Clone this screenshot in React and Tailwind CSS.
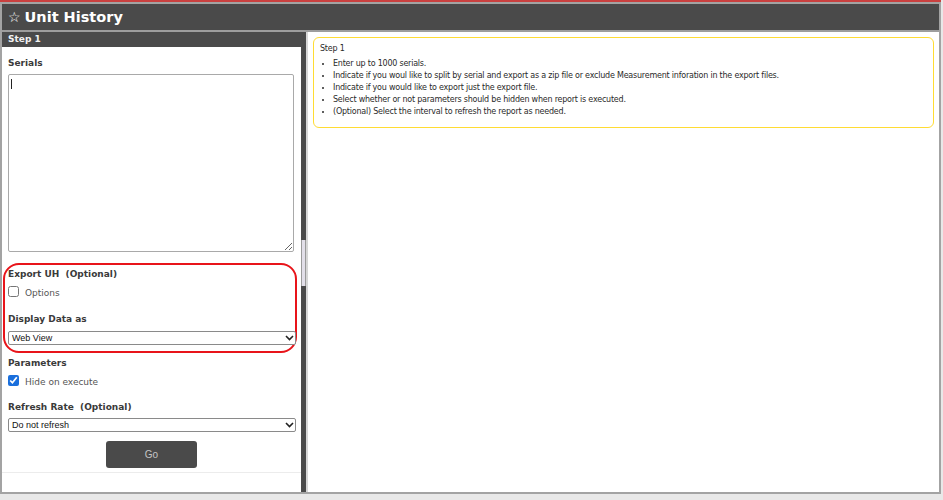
import { useState } from "react";

const Chevron = () => (
  <svg
    className="pointer-events-none absolute right-[2px] top-[4px]"
    width="9"
    height="6"
    viewBox="0 0 9 6"
  >
    <path d="M1 1l3.5 3.5L8 1" fill="none" stroke="#222" strokeWidth="1.6" />
  </svg>
);

const Select = ({ value, onChange, options }) => (
  <div className="relative h-[14px] w-[288px]">
    <select
      value={value}
      onChange={(e) => onChange(e.target.value)}
      className="block h-[14px] w-full appearance-none rounded-[2px] border border-[#8a8a8a] bg-white pl-[3px] font-['Liberation_Sans',sans-serif] text-[9px] leading-[12px] text-[#111]"
    >
      {options.map((o) => (
        <option key={o}>{o}</option>
      ))}
    </select>
    <Chevron />
  </div>
);

const Label = ({ children, className = "" }) => (
  <div className={`text-[9px] font-bold leading-[12px] text-[#3a3a3a] ${className}`}>
    {children}
  </div>
);

const App = () => {
  const [serials, setSerials] = useState("");
  const [exportOpt, setExportOpt] = useState(false);
  const [display, setDisplay] = useState("Web View");
  const [hide, setHide] = useState(true);
  const [refresh, setRefresh] = useState("Do not refresh");

  return (
    <div className="h-[500px] w-[943px] overflow-hidden bg-[#e8e8e8] font-['DejaVu_Sans',sans-serif]">
      <div className="h-[2px] w-[941px] bg-[#c9403f]" />
      <div className="flex h-[492px] w-[941px] flex-col border-x-2 border-t-2 border-b-2 border-[#a3a3a3] bg-white">
        {/* title bar */}
        <div className="flex h-[26px] shrink-0 items-center gap-[4px] bg-[#4a4a4a] pl-[6px] text-white">
          <span className="text-[14px] leading-none">☆</span>
          <span className="text-[14.5px] font-bold leading-none">Unit History</span>
        </div>
        <div className="h-[2px] shrink-0 bg-[#9d9d9d]" />

        <div className="flex min-h-0 flex-1">
          {/* left panel */}
          <div className="flex w-[299px] shrink-0 flex-col bg-white">
            <div className="flex h-[15px] shrink-0 items-center bg-[#4a4a4a] pl-[6px] text-[9px] font-bold text-[#f2f2f2]">
              Step 1
            </div>
            <div className="flex flex-col px-[6px]">
              <Label className="mt-[10px]">Serials</Label>
              <div className="relative mt-[5px]">
                <textarea
                  value={serials}
                  onChange={(e) => setSerials(e.target.value)}
                  className="block h-[178px] w-[286px] rounded-[2px] border border-[#a9a9a9] bg-white p-[2px] text-[9px]"
                />
                <span className="pointer-events-none absolute left-[3px] top-[5px] h-[10px] w-px bg-[#222]" />
              </div>

              <div className="relative mt-[16px]">
                <div className="pointer-events-none absolute -bottom-[8px] -left-[5px] -right-[2px] -top-[5px] rounded-[16px] border-2 border-[#e8141a]" />
                <Label>Export UH&nbsp; (Optional)</Label>
                <label className="mt-[6px] flex items-start gap-[6px]">
                  <input
                    type="checkbox"
                    checked={exportOpt}
                    onChange={(e) => setExportOpt(e.target.checked)}
                    className="m-0 h-[11px] w-[11px]"
                  />
                  <span className="mt-px text-[9px] leading-[12px] text-[#555]">Options</span>
                </label>
                <Label className="mt-[14px]">Display Data as</Label>
                <div className="mt-[6px]">
                  <Select
                    value={display}
                    onChange={setDisplay}
                    options={["Web View", "Excel", "CSV"]}
                  />
                </div>
              </div>

              <Label className="mt-[12px]">Parameters</Label>
              <label className="mt-[6px] flex items-start gap-[6px]">
                <input
                  type="checkbox"
                  checked={hide}
                  onChange={(e) => setHide(e.target.checked)}
                  className="m-0 h-[11px] w-[11px] accent-[#1a6fdc]"
                />
                <span className="mt-px text-[9px] leading-[12px] text-[#555]">Hide on execute</span>
              </label>

              <Label className="mt-[13px]">Refresh Rate&nbsp; (Optional)</Label>
              <div className="mt-[5px]">
                <Select
                  value={refresh}
                  onChange={setRefresh}
                  options={["Do not refresh", "1 minute", "5 minutes", "15 minutes"]}
                />
              </div>

              <button className="mx-auto mt-[9px] h-[27px] w-[91px] rounded-[3px] bg-[#4a4a4a] font-['Liberation_Sans',sans-serif] text-[10px] text-[#c4c4c4]">
                Go
              </button>
            </div>
            <div className="mt-[4px] h-px bg-[#ececec]" />
          </div>

          {/* splitter */}
          <div className="flex w-[5px] shrink-0 flex-col bg-[#4a4a4a]">
            <div className="mt-[208px] h-[46px] border-x border-[#9a9a9a] bg-[#e2dfe9]" />
          </div>
          <div className="w-[2px] shrink-0 bg-[#d6d6d6]" />

          {/* right panel */}
          <div className="flex-1 bg-white p-[5px]">
            <div className="rounded-[6px] border border-[#ffdc33] pb-[9px] pl-[6px] pt-[5px] text-[8px] leading-[12px] tracking-[-0.22px] text-[#2a2a2a]">
              <div>Step 1</div>
              <ul className="mt-[3px] list-disc pl-[13px]">
                <li>Enter up to 1000 serials.</li>
                <li>
                  Indicate if you woul like to split by serial and export as a zip file or exclude
                  Measurement inforation in the export files.
                </li>
                <li>Indicate if you would like to export just the export file.</li>
                <li>Select whether or not parameters should be hidden when report is executed.</li>
                <li>(Optional) Select the interval to refresh the report as needed.</li>
              </ul>
            </div>
          </div>
        </div>
      </div>
    </div>
  );
};

export default App;
